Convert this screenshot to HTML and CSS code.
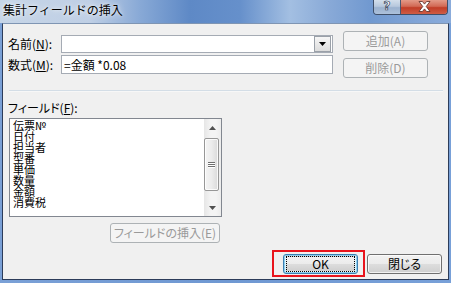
FILE: index.html
```html
<!DOCTYPE html>
<html lang="ja">
<head>
<meta charset="utf-8">
<title>集計フィールドの挿入</title>
<link rel="stylesheet" href="styles.css">
</head>
<body>
<div class="window">
  <div class="titlebar">
    <span class="title">集計フィールドの挿入</span>
    <div class="caption-btns">
      <div class="cbtn help"><span class="q">?</span></div>
      <div class="cbtn close">
        <svg width="13" height="11" viewBox="0 0 13 11"><path d="M1 0.5h3.4l2.1 2.6 2.1-2.6h3.4l-3.8 5 3.8 5h-3.4l-2.1-2.6-2.1 2.6h-3.4l3.8-5z" fill="#fff" stroke="#5a2a22" stroke-width="0.8" stroke-linejoin="round"/></svg>
      </div>
    </div>
  </div>
  <div class="frame">
    <div class="client">
      <div class="top">
        <div class="fields">
          <div class="row r1">
            <span class="label">名前(<u>N</u>):</span>
            <div class="combo">
              <span class="drop"><svg width="7" height="4" viewBox="0 0 7 4"><path d="M0 0h7L3.5 4z" fill="#000"/></svg></span>
            </div>
          </div>
          <div class="row r2">
            <span class="label">数式(<u>M</u>):</span>
            <div class="textbox">=金額 *0.08</div>
          </div>
        </div>
        <div class="side-btns">
          <div class="btn disabled">追加(A)</div>
          <div class="btn disabled">削除(D)</div>
        </div>
      </div>
      <div class="sep"></div>
      <div class="field-sec">
        <div class="flabel">フィールド(<u>F</u>):</div>
        <div class="listbox">
          <ul class="items">
            <li>伝票№</li>
            <li>日付</li>
            <li>担当者</li>
            <li>型番</li>
            <li>単価</li>
            <li>数量</li>
            <li>金額</li>
            <li>消費税</li>
          </ul>
          <div class="scrollbar">
            <div class="sb-arrow"><svg width="7" height="4" viewBox="0 0 7 4"><path d="M3.5 0L7 4H0z" fill="#505050"/></svg></div>
            <div class="sb-track">
              <div class="thumb"><span class="grip"></span><span class="grip"></span><span class="grip"></span></div>
            </div>
            <div class="sb-arrow"><svg width="7" height="4" viewBox="0 0 7 4"><path d="M0 0h7L3.5 4z" fill="#505050"/></svg></div>
          </div>
        </div>
        <div class="btn disabled insert">フィールドの挿入(E)</div>
      </div>
      <div class="bottom">
        <span class="mark">
          <span class="btn default"><span class="focus">OK</span></span>
        </span>
        <span class="btn normal">閉じる</span>
      </div>
    </div>
  </div>
</div>
</body>
</html>
```
FILE: styles.css
```css
* {
  box-sizing: border-box;
  margin: 0;
  padding: 0;
}

html, body {
  width: 451px;
  height: 283px;
  overflow: hidden;
}

body {
  font-family: "Noto Sans CJK JP", "Noto Sans", sans-serif;
  font-size: 12px;
  color: #000;
  background: #6d97d1;
}

.window {
  width: 451px;
  height: 283px;
  display: flex;
  flex-direction: column;
  background: linear-gradient(90deg, #7aa0d6 0%, #6f98d2 50%, #78a0d8 100%);
}

/* ---------- title bar ---------- */
.titlebar {
  height: 23px;
  display: flex;
  align-items: flex-start;
  padding-left: 3px;
  background: linear-gradient(90deg, #c6d5e7 0px, #bfcfe5 90px, #88a9d6 140px, #5e89c6 190px, #6690cb 240px, #a3bfe2 290px, #88a9d7 330px, #7199d0 370px, #8bacdb 451px);
}

.title {
  line-height: 14px;
  margin-top: 3px;
  font-size: 12px;
  color: #000;
  text-shadow: 0 0 6px rgba(255, 255, 255, 0.9), 0 0 3px rgba(255, 255, 255, 0.7);
}

.caption-btns {
  margin-left: auto;
  margin-right: 3px;
  display: flex;
  height: 15px;
  border: 1px solid #3f4f69;
  border-top: none;
  border-radius: 0 0 4px 4px;
  overflow: hidden;
}

.cbtn {
  height: 14px;
  display: flex;
  align-items: center;
  justify-content: center;
}

.help {
  width: 27px;
  border-right: 1px solid #4a5870;
  background: linear-gradient(to bottom, #d3deeb 0%, #b7c8dd 45%, #9bb2cf 55%, #adc1db 100%);
}

.help .q {
  font-family: "DejaVu Sans", sans-serif;
  font-weight: bold;
  font-size: 12px;
  line-height: 12px;
  color: #fff;
  -webkit-text-stroke: 0.7px #2f3d55;
  margin-top: -2px;
}

.close {
  width: 46px;
  background: linear-gradient(to bottom, #e39a88 0%, #d26a55 45%, #c13d27 55%, #cf5d45 100%);
}

.close svg {
  margin-top: -2px;
}

/* ---------- frame / client ---------- */
.frame {
  flex: 1;
  display: flex;
  padding: 0 2px 3px 2px;
}

.client {
  flex: 1;
  display: flex;
  flex-direction: column;
  background: #f0f0f0;
  border: 1px solid #2c3c5a;
  border-top-color: #7f95b3;
}

u {
  text-decoration: underline;
  text-underline-offset: 1px;
}

/* ---------- top area ---------- */
.top {
  display: flex;
  padding: 7px 0 0 5px;
}

.fields {
  margin-top: 4px;
  display: flex;
  flex-direction: column;
  gap: 2px;
}

.row {
  display: flex;
  align-items: center;
}

.label {
  width: 53px;
  line-height: 14px;
  font-feature-settings: "palt";
}

.combo {
  width: 272px;
  height: 18px;
  background: #fff;
  border: 1px solid #a5abb4;
  display: flex;
  justify-content: flex-end;
  padding: 0 1px 0 0;
}

.drop {
  width: 17px;
  height: 16px;
  border: 1px solid #9aa0a8;
  background: linear-gradient(to bottom, #f6f6f6, #dcdcdc);
  display: flex;
  align-items: center;
  justify-content: center;
}

.textbox {
  width: 272px;
  height: 19px;
  background: #fff;
  border: 1px solid #a5abb4;
  padding: 0 0 0 2px;
  line-height: 17px;
  white-space: pre;
}

.side-btns {
  margin-left: 10px;
  display: flex;
  flex-direction: column;
  gap: 7px;
}

/* ---------- buttons ---------- */
.btn {
  display: flex;
  align-items: center;
  justify-content: center;
  height: 20px;
  border-radius: 3px;
  font-feature-settings: "palt";
  line-height: 14px;
}

.side-btns .btn {
  width: 85px;
}

.disabled {
  border: 1px solid #adb2b5;
  background: #f4f4f4;
  color: #9a9a9a;
}

.normal {
  width: 75px;
  border: 1px solid #707070;
  background: linear-gradient(to bottom, #f2f2f2 0%, #ebebeb 50%, #dddddd 51%, #cfcfcf 100%);
  box-shadow: inset 0 0 0 1px rgba(255, 255, 255, 0.7);
}

.default {
  width: 75px;
  border: 1px solid #3c7fb1;
  background: linear-gradient(to bottom, #eaf6fd 0%, #d9f0fc 50%, #bee6fd 51%, #a7d9f5 100%);
  box-shadow: inset 0 0 0 1px #8fd0f0, inset 0 0 0 2px rgba(230, 246, 253, 0.8);
  padding: 1px 2px;
  align-items: stretch;
}

.focus {
  flex: 1;
  border: 1px dotted #000;
  display: flex;
  align-items: center;
  justify-content: center;
  background: linear-gradient(to bottom, #f2f2f2 0%, #ebebeb 50%, #dddddd 51%, #cfcfcf 100%);
}

/* ---------- separator ---------- */
.sep {
  margin: 12px 5px 0 6px;
  height: 2px;
  border-top: 1px solid #d3dde6;
  border-bottom: 1px solid #f7f7f7;
}

/* ---------- field list ---------- */
.field-sec {
  display: flex;
  flex-direction: column;
  align-items: flex-start;
}

.flabel {
  margin: 9px 0 0 5px;
  line-height: 14px;
  font-feature-settings: "palt";
}

.listbox {
  margin: 3px 0 0 6px;
  width: 213px;
  height: 99px;
  border: 1px solid #828790;
  background: #fff;
  display: flex;
  overflow: hidden;
}

.items {
  list-style: none;
  flex: 1;
  padding: 1px 0 0 3px;
  font-size: 11px;
  line-height: 11px;
}

.scrollbar {
  width: 17px;
  display: flex;
  flex-direction: column;
  background: linear-gradient(90deg, #e6e6e6, #f4f4f4 40%, #f4f4f4 70%, #ececec);
}

.sb-arrow {
  height: 17px;
  display: flex;
  align-items: center;
  justify-content: center;
}

.sb-track {
  flex: 1;
  padding-top: 2px;
}

.thumb {
  width: 15px;
  height: 53px;
  border: 1px solid #979797;
  border-radius: 2px;
  background: linear-gradient(90deg, #f4f4f4 0%, #ececec 50%, #dadada 100%);
  box-shadow: inset 0 0 0 1px rgba(255, 255, 255, 0.8);
  display: flex;
  flex-direction: column;
  align-items: center;
  justify-content: center;
  gap: 1px;
}

.grip {
  display: block;
  width: 7px;
  height: 1px;
  background: #6f6f6f;
  box-shadow: 0 1px 0 #ffffff;
}

.insert {
  margin: 6px 0 0 107px;
  width: 110px;
}

/* ---------- bottom buttons ---------- */
.bottom {
  margin-top: 7px;
  display: flex;
  justify-content: flex-end;
  align-items: flex-start;
  padding-right: 6px;
}

.mark {
  display: flex;
  border: 2px solid #e8141c;
  padding: 2px 5px 1px 9px;
}

.bottom .normal {
  margin-left: 2px;
  margin-top: 4px;
}
```
